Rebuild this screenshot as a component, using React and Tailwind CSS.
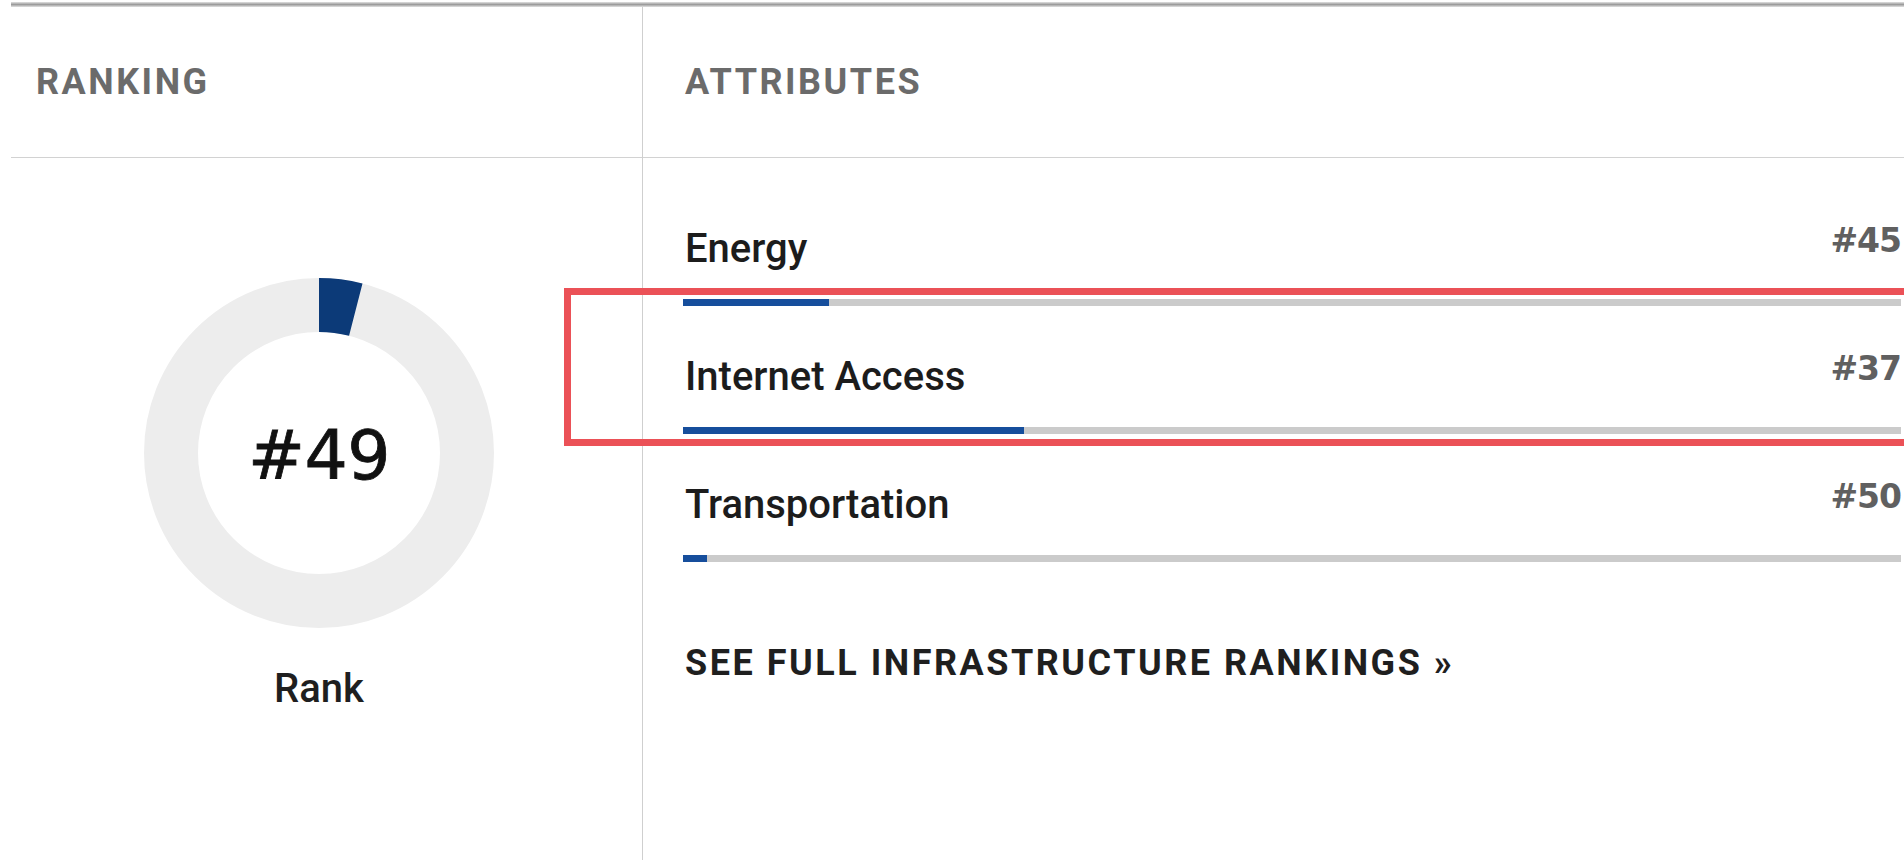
const TOTAL = 50;

const attributes = [
  { name: 'Energy', rank: 45 },
  { name: 'Internet Access', rank: 37 },
  { name: 'Transportation', rank: 50 },
];

// share of the bar filled: #1 is full, #50 is a sliver
const fillFor = (rank) => ((TOTAL - rank + 1) / TOTAL) * 100;

function RankDonut({ rank }) {
  const r = 148;
  const circ = 2 * Math.PI * r;
  const seg = (fillFor(rank) / 100) * circ;

  return (
    <div className="relative w-[350px] h-[350px]">
      <svg width="350" height="350" viewBox="0 0 350 350" className="-rotate-90">
        <circle cx="175" cy="175" r={r} fill="none" stroke="#ededed" strokeWidth="54" />
        <circle
          cx="175"
          cy="175"
          r={r}
          fill="none"
          stroke="#0c3a78"
          strokeWidth="54"
          strokeDasharray={`${seg} ${circ}`}
        />
      </svg>
      <div className="absolute inset-0 flex items-center justify-center pt-[6px]">
        <span className="font-['DejaVu_Sans',sans-serif] text-[68px] leading-none tracking-[-0.5px] text-[#111] [-webkit-text-stroke:0.8px_#111]">
          #{rank}
        </span>
      </div>
    </div>
  );
}

function AttributeRow({ name, rank }) {
  return (
    <div className="flex flex-col">
      <div className="flex h-[48px] items-end justify-between">
        <span className="ml-[2px] font-['Roboto',sans-serif] font-medium text-[40px] leading-[48px] text-[#1c1c1c]">
          {name}
        </span>
        <span className="mb-[8px] font-['DejaVu_Sans',sans-serif] font-bold text-[33px] leading-[48px] tracking-[-1px] text-[#606060]">
          #{rank}
        </span>
      </div>
      <div className="mt-[26px] h-[7px] bg-[#cbcbcb]">
        <div className="h-full bg-[#164e9c]" style={{ width: `${fillFor(rank)}%` }} />
      </div>
    </div>
  );
}

export default function App() {
  return (
    <div className="relative h-screen overflow-hidden bg-white pt-[2px] font-['Roboto',sans-serif]">
      <div className="ml-[11px] h-[5px] bg-linear-to-b from-[#e2e2e2] via-[#9c9c9c] to-[#e2e2e2]" />

      <div className="ml-[11px] flex h-[calc(100%-7px)]">
        {/* ranking column */}
        <div className="w-[632px] shrink-0 border-r border-[#cfcfcf]">
          <div className="h-[151px] border-b border-[#d2d2d2] pl-[25px] flex items-center">
            <h2 className="text-[36px] leading-[44px] font-bold tracking-[0.07em] text-[#6b6b6b]">RANKING</h2>
          </div>
          <div className="pl-[22px] pr-[37px] pt-[120px] flex flex-col items-center">
            <RankDonut rank={49} />
            <div className="mt-[37px] text-[40px] leading-[48px] font-medium text-[#1f1f1f]">Rank</div>
          </div>
        </div>

        {/* attributes column */}
        <div className="flex-1">
          <div className="h-[151px] border-b border-[#d2d2d2] pl-[42px] flex items-center">
            <h2 className="text-[36px] leading-[44px] font-bold tracking-[0.07em] text-[#6b6b6b]">ATTRIBUTES</h2>
          </div>
          <div className="pl-10 pr-[3px] pt-[67px]">
            <div className="flex flex-col gap-[47px]">
              {attributes.map((a) => (
                <AttributeRow key={a.name} name={a.name} rank={a.rank} />
              ))}
            </div>
            <a href="#" className="mt-[79px] ml-[2px] block text-[36px] leading-[44px] font-bold tracking-[0.07em] text-[#1f1f1f]">
              SEE FULL INFRASTRUCTURE RANKINGS »
            </a>
          </div>
        </div>
      </div>

      {/* highlight around the internet access row */}
      <div className="absolute left-[564px] top-[288px] right-[-20px] h-[158px] border-[7px] border-[#eb5157] pointer-events-none" />
    </div>
  );
}
